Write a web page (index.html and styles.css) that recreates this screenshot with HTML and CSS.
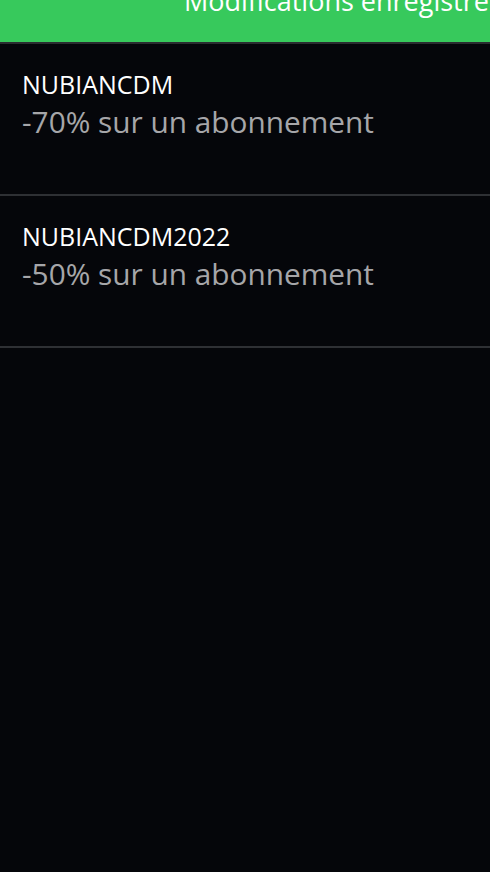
FILE: index.html
```html
<!DOCTYPE html>
<html lang="fr">
<head>
<meta charset="utf-8">
<title>Codes promo</title>
<link rel="stylesheet" href="styles.css">
</head>
<body>
<div class="toast"><div class="toast-text">Modifications enregistrées</div></div>
<ul class="list">
  <li class="item">
    <div class="code">NUBIANCDM</div>
    <div class="desc">-70% sur un abonnement</div>
  </li>
  <li class="item">
    <div class="code">NUBIANCDM2022</div>
    <div class="desc">-50% sur un abonnement</div>
  </li>
</ul>
</body>
</html>
```
FILE: styles.css
```css
html, body {
  margin: 0;
  padding: 0;
  background: #05060a;
  height: 100%;
}
body {
  font-family: "Open Sans", "Liberation Sans", sans-serif;
  color: #fff;
  overflow: hidden;
}
.toast {
  height: 42px;
  background: #37c95c;
  border-bottom: 2px solid #2a2c30;
  overflow: hidden;
}
.toast-text {
  margin-top: -20px;
  padding-left: 184px;
  font-size: 27px;
  line-height: 42px;
  white-space: nowrap;
  color: #fff;
}
.list {
  list-style: none;
  margin: 0;
  padding: 0;
}
.item {
  padding: 23px 22px 0;
  height: 127px;
  border-bottom: 2px solid #2e3034;
}
.code {
  font-size: 25px;
  line-height: 34px;
  color: #fff;
}
.desc {
  margin-top: 1px;
  font-size: 29.8px;
  line-height: 40px;
  color: #a6a6a9;
}
```
